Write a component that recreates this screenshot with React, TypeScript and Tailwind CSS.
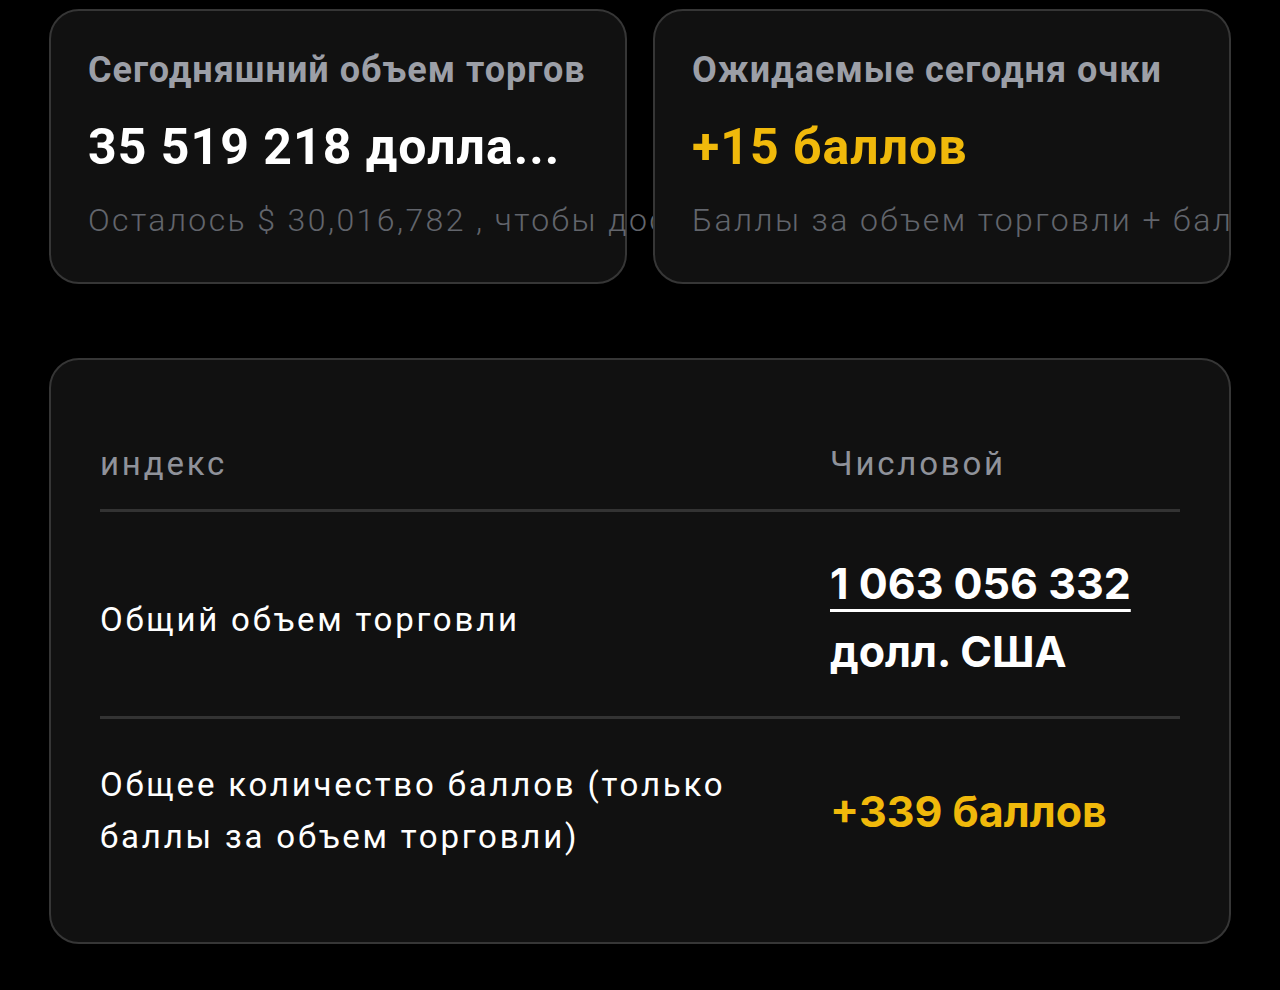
import React from "react";

const roboto = { fontFamily: "Roboto, 'Noto Sans', sans-serif" };
const inter = { fontFamily: "Inter, Roboto, sans-serif" };

function StatCard({ title, value, valueClass, note }: { title: string; value: string; valueClass: string; note: string }) {
  return (
    <div className="relative w-[578px] h-[275px] shrink-0 rounded-[30px] border-2 border-[#363636] bg-[#111111] pl-[37px] pt-[39px]">
      <p className="text-[36px] leading-[40px] font-bold tracking-[1px] text-[#9c9fa7]">{title}</p>
      <p className={`mt-[29px] text-[50px] leading-[56px] font-bold tracking-[1px] whitespace-nowrap ${valueClass}`}>{value}</p>
      <p className="mt-[25px] text-[32px] leading-[40px] font-light tracking-[2.4px] text-[#62656c] whitespace-nowrap">{note}</p>
    </div>
  );
}

export default function App() {
  return (
    <div className="min-h-[990px] bg-black pt-[9px] pb-[45px]" style={roboto}>
      <div className="mx-[49px] w-[1182px] overflow-hidden flex gap-[26px]">
        <StatCard
          title="Сегодняшний объем торгов"
          value="35 519 218 долла..."
          valueClass="text-white"
          note="Осталось $ 30,016,782 , чтобы достичь следующего уровня"
        />
        <StatCard
          title="Ожидаемые сегодня очки"
          value="+15 баллов"
          valueClass="text-[#f0b90b]"
          note="Баллы за объем торговли + баллы за баланс"
        />
      </div>

      <div className="mx-[49px] mt-[74px] w-[1182px] rounded-[30px] border-2 border-[#363636] bg-[#111111] px-[49px] pt-[84px] pb-[39px]">
        <div className="grid grid-cols-[730px_1fr] pb-[25px] border-b-[3px] border-[#333333] text-[33px] leading-[40px] tracking-[2.8px] text-[#8f929a]">
          <span>индекс</span>
          <span>Числовой</span>
        </div>

        <div className="grid grid-cols-[730px_1fr] items-center pt-[37px] pb-[31px] border-b-[3px] border-[#333333]">
          <span className="mt-[6px] text-[33px] leading-[52px] tracking-[2.8px] text-white">Общий объем торговли</span>
          <div className="text-[43px] leading-[68px] font-bold text-white" style={inter}>
            <p>
              <span className="underline decoration-[3px] underline-offset-[10px]">1 063 056 332</span>
            </p>
            <p>долл. США</p>
          </div>
        </div>

        <div className="grid grid-cols-[730px_1fr] items-center py-[40px]">
          <span className="pr-[60px] text-[33px] leading-[52px] tracking-[2.8px] text-white">
            Общее количество баллов (только баллы за объем торговли)
          </span>
          <span className="text-[43px] leading-[68px] font-bold text-[#f0b90b]" style={inter}>
            +339 баллов
          </span>
        </div>
      </div>
    </div>
  );
}
